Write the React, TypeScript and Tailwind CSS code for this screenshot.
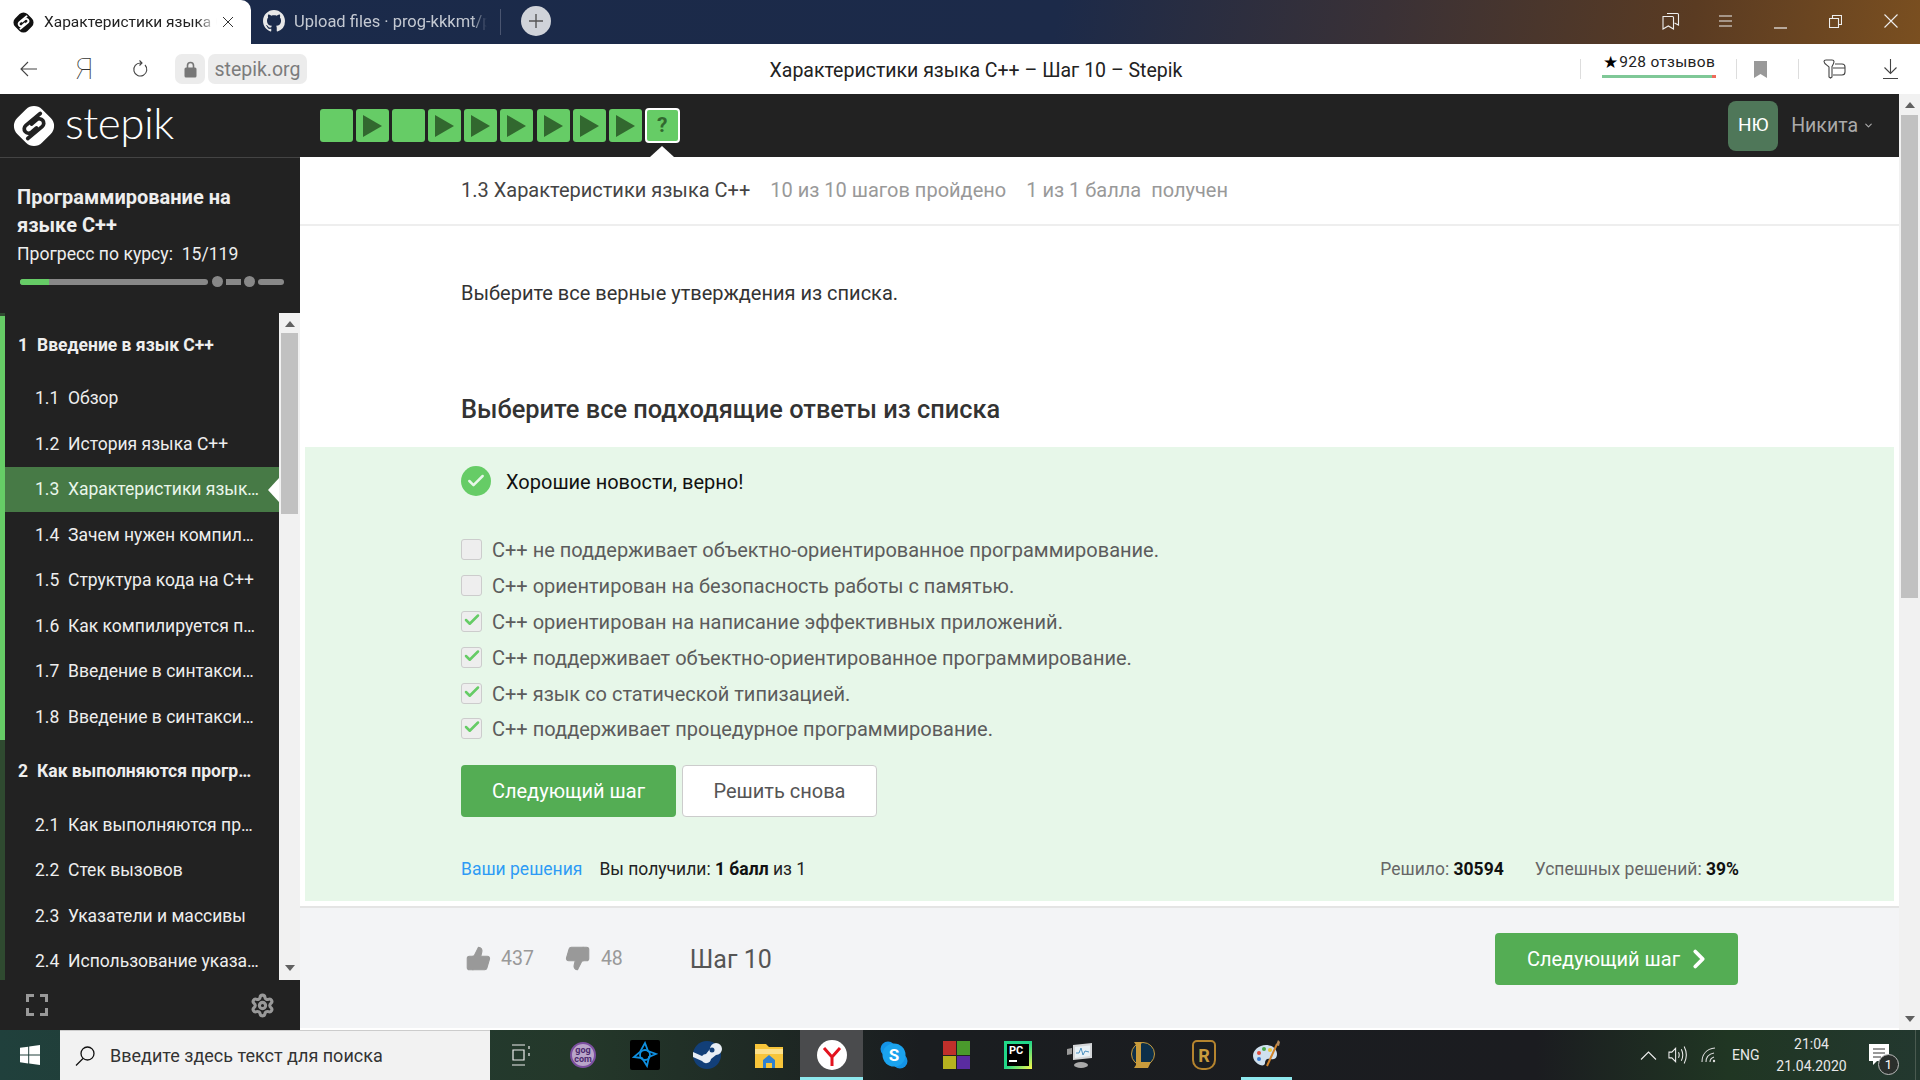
import type { ReactNode } from 'react'
import { Check, ChevronDown, ChevronRight, Settings, ThumbsDown, ThumbsUp } from 'lucide-react'

type Lesson = { num: string; title: string; done: boolean; active?: boolean }

const STEPS = ['square', 'play', 'square', 'play', 'play', 'play', 'play', 'play', 'play']

const LESSONS_1: Lesson[] = [
  { num: '1.1', title: 'Обзор', done: true },
  { num: '1.2', title: 'История языка С++', done: true },
  { num: '1.3', title: 'Характеристики языка С++', done: true, active: true },
  { num: '1.4', title: 'Зачем нужен компилятор', done: true },
  { num: '1.5', title: 'Структура кода на С++', done: true },
  { num: '1.6', title: 'Как компилируется программа', done: true },
  { num: '1.7', title: 'Введение в синтаксис С++', done: true },
  { num: '1.8', title: 'Введение в синтаксис С++', done: true },
]

const LESSONS_2: Lesson[] = [
  { num: '2.1', title: 'Как выполняются программы', done: false },
  { num: '2.2', title: 'Стек вызовов', done: false },
  { num: '2.3', title: 'Указатели и массивы', done: false },
  { num: '2.4', title: 'Использование указателей', done: false },
]

const ANSWERS = [
  { text: 'С++ не поддерживает объектно-ориентированное программирование.', checked: false },
  { text: 'С++ ориентирован на безопасность работы с памятью.', checked: false },
  { text: 'С++ ориентирован на написание эффективных приложений.', checked: true },
  { text: 'С++ поддерживает объектно-ориентированное программирование.', checked: true },
  { text: 'С++ язык со статической типизацией.', checked: true },
  { text: 'С++ поддерживает процедурное программирование.', checked: true },
]

function StepikMark({ size, color, hole }: { size: number; color: string; hole: string }) {
  return (
    <svg width={size} height={size} viewBox="0 0 40 40">
      <rect x="6" y="6" width="28" height="28" rx="9" transform="rotate(45 20 20)" fill={color} />
      <path
        d="M25 10 L13.500 19.500 a3.500 3.500 0 0 0 4.500 5.500 L22 21.500"
        fill="none"
        stroke={hole}
        strokeWidth="3"
        strokeLinecap="round"
        strokeLinejoin="round"
      />
      <path
        d="M15 30 L26.500 20.500 a3.500 3.500 0 0 0 -4.500 -5.500 L18 18.500"
        fill="none"
        stroke={hole}
        strokeWidth="3"
        strokeLinecap="round"
        strokeLinejoin="round"
      />
    </svg>
  )
}

function TabBar() {
  return (
    <div className="flex h-[44px] items-stretch bg-[linear-gradient(100deg,#1a2a4a_0%,#1c2a49_55%,#3a3136_72%,#5a3b22_88%,#7a4f20_100%)]">
      <div className="flex w-[251px] items-center rounded-tr-[10px] bg-white pl-[11px]">
        <StepikMark size={25} color="#111" hole="#fff" />
        <span className="mt-[2px] ml-[8px] w-[173px] overflow-hidden text-[15.5px] whitespace-nowrap text-[#222] [mask-image:linear-gradient(90deg,#000_88%,transparent)]">Характеристики языка С++</span>
        <svg width="12" height="12" viewBox="0 0 12 12" className="ml-[5px]">
          <path d="M1 1l10 10M11 1L1 11" stroke="#333" strokeWidth="1" />
        </svg>
      </div>
      <div className="flex w-[249px] items-center pb-[2px] pl-[12px]">
        <svg width="22" height="22" viewBox="0 0 16 16" fill="#e8e8e8">
          <path d="M8 0C3.58 0 0 3.58 0 8c0 3.54 2.29 6.53 5.47 7.59.4.07.55-.17.55-.38 0-.19-.01-.82-.01-1.49-2.01.37-2.53-.49-2.69-.94-.09-.23-.48-.94-.82-1.13-.28-.15-.68-.52-.01-.53.63-.01 1.08.58 1.23.82.72 1.21 1.87.87 2.33.66.07-.52.28-.87.51-1.07-1.78-.2-3.64-.89-3.64-3.95 0-.87.31-1.59.82-2.15-.08-.2-.36-1.02.08-2.12 0 0 .67-.21 2.2.82.64-.18 1.32-.27 2-.27s1.36.09 2 .27c1.53-1.04 2.2-.82 2.2-.82.44 1.1.16 1.92.08 2.12.51.56.82 1.27.82 2.15 0 3.07-1.87 3.75-3.65 3.95.29.25.54.73.54 1.48 0 1.07-.01 1.93-.01 2.2 0 .21.15.46.55.38A8.01 8.01 0 0 0 16 8c0-4.42-3.58-8-8-8z" />
        </svg>
        <span className="mt-[2px] ml-[9px] w-[193px] overflow-hidden text-[16.5px] whitespace-nowrap text-[#c4c9d2] [mask-image:linear-gradient(90deg,#000_92%,transparent)]">Upload files · prog-kkkmt/prog</span>
      </div>
      <div className="my-[9px] w-px bg-[#4a5570]" />
      <div className="ml-[20px] flex items-center pb-[2px]">
        <div className="flex h-[30px] w-[30px] items-center justify-center rounded-full bg-[#d0d3d9]">
          <svg width="16" height="16" viewBox="0 0 16 16">
            <path d="M8 1v14M1 8h14" stroke="#555" strokeWidth="1.4" />
          </svg>
        </div>
      </div>
      <div className="ml-auto flex items-center pr-[22px] pb-[2px]">
        <svg width="18" height="20" viewBox="0 0 18 20" fill="none" stroke="#eee" strokeWidth="1.1" className="mr-[39px]">
          <path d="M1 5.500h9.500c.6 0 1 .4 1 1V18l-5.200-3L1 18V5.500zM5 2.500h10.500c.6 0 1 .4 1 1V14l-4-2" />
        </svg>
        <svg width="13" height="12" viewBox="0 0 13 12" stroke="#eee" strokeWidth="1.1" className="mr-[42px]">
          <path d="M0 1h13M0 6h13M0 11h13" />
        </svg>
        <svg width="13" height="4" viewBox="0 0 13 4" stroke="#eee" strokeWidth="1.2" className="mt-[11px] mr-[42px]">
          <path d="M0 3h13" />
        </svg>
        <svg width="13" height="13" viewBox="0 0 13 13" fill="none" stroke="#eee" strokeWidth="1.1" className="mr-[42px]">
          <path d="M.5 3.500h9v9h-9zM3.500 3.500v-3h9v9h-3" />
        </svg>
        <svg width="14" height="14" viewBox="0 0 14 14" stroke="#eee" strokeWidth="1.1">
          <path d="M.5.5l13 13M13.500.5l-13 13" />
        </svg>
      </div>
    </div>
  )
}

function AddressBar() {
  return (
    <div className="flex h-[50px] items-center bg-white">
      <svg width="18" height="16" viewBox="0 0 18 16" fill="none" stroke="#444" strokeWidth="1.1" className="ml-[20px]">
        <path d="M17 8H1M8 1L1 8l7 7" />
      </svg>
      <span className="ml-[36px] w-[20px] text-center text-[30px] leading-none font-thin text-[#333]">Я</span>
      <svg width="16" height="18" viewBox="0 0 16 18" fill="none" stroke="#444" strokeWidth="1.1" className="ml-[38px]">
        <path d="M13 5a6.500 6.500 0 1 1-4.500-2H10M7.500.5L10 3 7.500 5.500" />
      </svg>
      <div className="ml-[27px] flex h-[30px] w-[30px] items-center justify-center rounded-[7px] bg-[#ececec]">
        <svg width="13" height="17" viewBox="0 0 13 17">
          <path d="M3.500 7V4.500a3 3 0 0 1 6 0V7" fill="none" stroke="#777" strokeWidth="1.6" />
          <rect x="0.5" y="6.500" width="12" height="10" rx="1.500" fill="#777" />
        </svg>
      </div>
      <div className="ml-[3px] flex h-[30px] w-[99px] items-center justify-center rounded-[7px] bg-[#ececec] pt-[1px] text-[19.5px] text-[#7c7c7c]">
        stepik.org
      </div>
      <div className="mt-[3px] ml-[409px] w-[520px] text-center text-[19.5px] text-[#222]">Характеристики языка С++ – Шаг 10 – Stepik</div>
      <div className="ml-[344px] h-[20px] w-px bg-[#ddd]" />
      <div className="ml-[21px] flex w-[114px] flex-col pb-[10px]">
        <div className="flex h-[25px] items-center justify-center text-[15.5px] tracking-[0.3px] whitespace-nowrap text-[#222]">
          <span className="mr-[1px] text-[17px] text-black">★</span>928 отзывов
        </div>
        <div className="flex h-[3px]">
          <div className="w-[110px] bg-[#7fc897]" />
          <div className="w-[4px] bg-[#ee6a5a]" />
        </div>
      </div>
      <div className="ml-[20px] h-[20px] w-px bg-[#ddd]" />
      <svg width="13" height="17" viewBox="0 0 13 17" fill="#999" className="ml-[17px]">
        <path d="M0 0h13v17l-6.500-4L0 17z" />
      </svg>
      <div className="ml-[31px] h-[20px] w-px bg-[#ddd]" />
      <svg width="23" height="20" viewBox="0 0 23 20" fill="none" stroke="#444" strokeWidth="1.1" className="ml-[24px]">
        <path d="M1 2.500C1 1.500 2 1 3 1h6c1 0 2 .6 2 1.600 0 2-1.500 4-2 5V18l-1.500 1L6 18V8C5 6.500 1 5 1 2.500zM12 5h7c2 0 3 1 3 3v5c0 2-1 3-3 3h-9M10 9h12" />
      </svg>
      <svg width="15" height="20" viewBox="0 0 15 20" fill="none" stroke="#444" strokeWidth="1.1" className="ml-[37px]">
        <path d="M7.500 0v14M1.500 8.500l6 6 6-6M0 19.500h15" />
      </svg>
    </div>
  )
}

function StepTile({ kind }: { kind: string }) {
  return (
    <div className="flex h-[33px] w-[33px] items-center justify-center rounded-[3px] bg-[#66cc66]">
      {kind === 'play' && (
        <svg width="21" height="24" viewBox="0 0 21 24">
          <path d="M1 1l19 11L1 23z" fill="#32682f" />
        </svg>
      )}
    </div>
  )
}

function AppHeader() {
  return (
    <div className="flex h-[63px] items-center bg-[#222]">
      <div className="flex w-[320px] items-center pl-[9px]">
        <StepikMark size={50} color="#fff" hole="#222" />
        <span className="ml-[6px] pb-[7px] text-[44px] leading-none font-light tracking-[-0.5px] text-white [font-family:Lato,sans-serif]">stepik</span>
      </div>
      <div className="flex items-center gap-[3.100px]">
        {STEPS.map((kind, i) => (
          <StepTile key={i} kind={kind} />
        ))}
        <div className="relative">
          <div className="flex h-[35px] w-[35px] items-center justify-center rounded-[4px] border-2 border-white bg-[#66cc66] text-[21px] font-bold text-[#32682f]">?</div>
          <div className="absolute top-[38px] left-[5px] h-0 w-0 border-x-[12px] border-b-[11px] border-x-transparent border-b-white" />
        </div>
      </div>
      <div className="ml-auto flex items-center pr-[25px]">
        <div className="flex h-[50px] w-[50px] items-center justify-center rounded-[8px] bg-[#4f7759] text-[19px] text-white">НЮ</div>
        <span className="ml-[13px] text-[19.5px] text-[#aaa]">Никита</span>
        <ChevronDown size={11} strokeWidth={2.5} className="ml-[5px] text-[#aaa]" />
      </div>
    </div>
  )
}

function LessonRow({ lesson }: { lesson: Lesson }) {
  const strip = lesson.done ? 'border-[#66cc66]' : 'border-[#2f4a30]'
  return (
    <div className={`relative flex h-[45.5px] items-center border-l-[5px] pl-[30px] ${strip} ${lesson.active ? 'bg-[#477a46] text-[#eaf6ea]' : 'text-[#eee]'}`}>
      <span className="w-[33px] shrink-0">{lesson.num}</span>
      <span className="w-[192px] overflow-hidden text-ellipsis whitespace-nowrap">{lesson.title}</span>
      {lesson.active && (
        <div className="absolute top-[11px] right-0 h-0 w-0 border-y-[12px] border-r-[11px] border-y-transparent border-r-white" />
      )}
    </div>
  )
}

function SectionRow({ num, title, strip, lift }: { num: string; title: string; strip: string; lift?: boolean }) {
  return (
    <div className={`flex h-[62.5px] items-center border-l-[5px] pl-[13px] font-bold text-[#eee] ${strip} ${lift ? 'pb-[5px]' : ''}`}>
      <span className="w-[19px] shrink-0">{num}</span>
      <span className="w-[218px] overflow-hidden text-ellipsis whitespace-nowrap">{title}</span>
    </div>
  )
}

function ScrollArrow({ up, className }: { up: boolean; className?: string }) {
  return (
    <svg width="10" height="6" viewBox="0 0 10 6" fill="#606060" className={className}>
      <path d={up ? 'M5 0l5 6H0z' : 'M0 0h10L5 6z'} />
    </svg>
  )
}

function Sidebar() {
  return (
    <div className="flex w-[300px] shrink-0 flex-col border-t border-[#444] bg-[#222]">
      <div className="h-[155px] pt-[25px] pl-[17px]">
        <div className="w-[250px] text-[20px] leading-[28px] font-bold text-[#eee]">Программирование на языке С++</div>
        <div className="mt-[1px] text-[17.6px] leading-[28px] text-[#eee]">Прогресс по курсу:&nbsp; 15/119</div>
        <div className="mt-[8px] ml-[3px] flex items-center">
          <div className="flex h-[6px] w-[188px] overflow-hidden rounded-full bg-[#888]">
            <div className="w-[29px] bg-[#66cc66]" />
          </div>
          <div className="ml-[4px] h-[11px] w-[11px] rounded-full bg-[#888]" />
          <div className="ml-[3px] h-[6px] w-[15px] bg-[#888]" />
          <div className="ml-[3px] h-[11px] w-[11px] rounded-full bg-[#888]" />
          <div className="ml-[3px] h-[6px] w-[26px] rounded-full bg-[#888]" />
        </div>
      </div>
      <div className="flex h-[667px]">
        <div className="w-[279px] overflow-hidden text-[17.5px]">
          <div className="h-[3px] border-l-[5px] border-[#2f4a30]" />
          <SectionRow num="1" title="Введение в язык С++" strip="border-[#66cc66]" lift />
          <div className="-mt-[3px]">
            {LESSONS_1.map((l) => (
              <LessonRow key={l.num} lesson={l} />
            ))}
          </div>
          <SectionRow num="2" title="Как выполняются программы" strip="border-[#2f4a30]" />
          {LESSONS_2.map((l) => (
            <LessonRow key={l.num} lesson={l} />
          ))}
        </div>
        <div className="flex w-[21px] flex-col items-center bg-[#f1f1f1]">
          <ScrollArrow up className="mt-[8px]" />
          <div className="mt-[6px] h-[181px] w-[17px] bg-[#c1c1c1]" />
          <ScrollArrow up={false} className="mt-auto mb-[9px]" />
        </div>
      </div>
      <div className="flex h-[50px] items-center justify-between pr-[25px] pl-[26px]">
        <svg width="22" height="22" viewBox="0 0 22 22" fill="none" stroke="#999" strokeWidth="3">
          <path d="M1.500 8V1.500H8M14 1.500h6.500V8M20.500 14v6.500H14M8 20.500H1.500V14" />
        </svg>
        <Settings size={25} strokeWidth={3} className="text-[#999]" />
      </div>
    </div>
  )
}

function AnswerRow({ text, checked }: { text: string; checked: boolean }) {
  return (
    <div className="flex h-[35.8px] items-center">
      <div className="flex h-[21px] w-[21px] shrink-0 items-center justify-center rounded-[3px] border border-[#ccc] bg-[#eee]">
        {checked && <Check size={18} strokeWidth={3.4} className="-mt-[3px] text-[#66cc66]" />}
      </div>
      <span className="mt-[1px] ml-[10px] text-[20px] text-[#5c5c5c]">{text}</span>
    </div>
  )
}

function FeedbackPanel() {
  return (
    <div className="mx-[5px] bg-[#e7f7e9] pt-[19px] pr-[155px] pb-[18px] pl-[156px]">
      <div className="flex h-[30px] items-center">
        <div className="flex h-[30px] w-[30px] items-center justify-center rounded-full bg-[#66cc66]">
          <Check size={20} strokeWidth={3} className="text-[#e7f7e9]" />
        </div>
        <span className="mt-[1px] ml-[15px] text-[20px] text-[#111]">Хорошие новости, верно!</span>
      </div>
      <div className="mt-[36px]">
        {ANSWERS.map((a) => (
          <AnswerRow key={a.text} text={a.text} checked={a.checked} />
        ))}
      </div>
      <div className="mt-[18.200px] flex gap-[6px]">
        <button className="h-[52px] w-[215px] rounded-[4px] bg-[#54ad54] text-[20px] text-white">Следующий шаг</button>
        <button className="h-[52px] w-[195px] rounded-[4px] border border-[#ccc] bg-white text-[20px] text-[#555]">Решить снова</button>
      </div>
      <div className="mt-[38px] flex h-[28px] items-center text-[17.5px]">
        <span className="text-[#2e9bf5]">Ваши решения</span>
        <span className="ml-[17px] text-[#222]">
          Вы получили: <b className="text-[#111]">1 балл</b> из 1
        </span>
        <span className="ml-auto text-[#666]">
          Решило: <b className="text-[#111]">30594</b>
        </span>
        <span className="ml-[31px] text-[#666]">
          Успешных решений: <b className="text-[#111]">39%</b>
        </span>
      </div>
    </div>
  )
}

function StepFooter() {
  return (
    <div className="flex h-[122px] items-start border-t-2 border-[#e4e4e4] bg-[#f3f4f6] pt-[25px] pr-[161px] pl-[165px]">
      <div className="flex h-[52px] items-center text-[19.5px] text-[#999]">
        <ThumbsUp size={27} fill="#999" strokeWidth={1} />
        <span className="ml-[9px]">437</span>
        <ThumbsDown size={27} fill="#999" strokeWidth={1} className="ml-[30px]" />
        <span className="ml-[10px]">48</span>
        <span className="mt-[1px] ml-[67px] text-[25px] text-[#555]">Шаг 10</span>
      </div>
      <button className="ml-auto flex h-[52px] w-[243px] items-center justify-center rounded-[4px] bg-[#54ad54] pl-[8px] text-[20px] text-white">
        Следующий шаг
        <ChevronRight size={30} strokeWidth={3} className="ml-[4px]" />
      </button>
    </div>
  )
}

function MainColumn() {
  return (
    <div className="flex flex-1 flex-col bg-white">
      <div className="flex h-[69px] items-center border-b-2 border-[#eee] pb-[1px] pl-[161px] text-[20px]">
        <span className="text-[#444]">1.3 Характеристики языка С++</span>
        <span className="ml-[20px] text-[#999]">10 из 10 шагов пройдено</span>
        <span className="ml-[20px] text-[#999]">1 из 1 балла&nbsp; получен</span>
      </div>
      <div className="h-[221px] pt-[53px] pl-[161px]">
        <p className="text-[20px] leading-[28px] text-[#333]">Выберите все верные утверждения из списка.</p>
        <h2 className="mt-[86px] text-[25.4px] leading-[32px] font-medium text-[#333]">Выберите все подходящие ответы из списка</h2>
      </div>
      <FeedbackPanel />
      <div className="h-[5px]" />
      <StepFooter />
    </div>
  )
}

function AppIcon({ children, w = 62 }: { children: ReactNode; w?: number }) {
  return (
    <div className="flex h-full items-center justify-center" style={{ width: w }}>
      {children}
    </div>
  )
}

function Taskbar() {
  return (
    <div className="flex h-[50px] items-stretch bg-[linear-gradient(90deg,#20403c_0%,#24382a_30%,#1a1d20_48%,#1b1c20_80%,#203623_90%,#23382f_100%)]">
      <div className="flex w-[60px] items-center justify-center">
        <svg width="20" height="20" viewBox="0 0 20 20" fill="#fff">
          <path d="M0 2.800l8.200-1.100v7.900H0zM9.200 1.500L20 0v9.600H9.200zM0 10.500h8.200v7.900L0 17.200zM9.200 10.500H20V20l-10.800-1.500z" />
        </svg>
      </div>
      <div className="flex w-[430px] items-center border-t border-[#ccc] bg-[#f2f2f2] pl-[14px]">
        <svg width="22" height="22" viewBox="0 0 22 22" fill="none" stroke="#111" strokeWidth="1.3">
          <circle cx="13.500" cy="8.500" r="6.500" />
          <path d="M9 13.500L2 20.500" />
        </svg>
        <span className="ml-[14px] text-[18px] text-[#333]">Введите здесь текст для поиска</span>
      </div>
      <AppIcon>
        <svg width="20" height="22" viewBox="0 0 20 22" fill="none" stroke="#eee" strokeWidth="1.2">
          <path d="M1 1h13M1 21h13M2 6h11v10H2zM18 2v3M18 9v3" />
        </svg>
      </AppIcon>
      <AppIcon>
        <div className="flex h-[26px] w-[26px] flex-col items-center justify-center rounded-full border-2 border-[#7c4fa0] bg-[#b9a5c9] text-[9px] leading-[9px] font-bold text-[#4b2a6e]">
          <span>gog</span>
          <span>com</span>
        </div>
      </AppIcon>
      <AppIcon>
        <div className="flex h-[30px] w-[30px] items-center justify-center rounded-[2px] bg-black">
          <svg width="26" height="28" viewBox="0 0 26 28" fill="none" stroke="#0f8fe0" strokeWidth="1.8">
            <path d="M13 2l3 8 8 3-7 3-2 9-5-8-8-1 6-5z" />
            <circle cx="13" cy="14" r="5" />
          </svg>
        </div>
      </AppIcon>
      <AppIcon>
        <svg width="30" height="30" viewBox="0 0 30 30">
          <circle cx="15" cy="15" r="14" fill="#123f78" />
          <path d="M1 17l9 4a5 5 0 0 0 9-2l5-4a6 6 0 1 0-6-6l-4 5a5 5 0 0 0-4 2L1 12z" fill="#e8eef5" />
          <circle cx="20" cy="10" r="2.500" fill="#123f78" />
        </svg>
      </AppIcon>
      <AppIcon>
        <svg width="28" height="26" viewBox="0 0 28 26">
          <path d="M0 2h11l3 3h14v21H0z" fill="#f8c53a" />
          <path d="M0 7h28v5H0z" fill="#fde08a" />
          <path d="M8 18l6-5 6 5v8h-3v-5h-6v5H8z" fill="#2f80d0" />
        </svg>
      </AppIcon>
      <div className="flex w-[63px] flex-col border-b-[3px] border-[#8ee8ee] bg-[#4a4b4d]">
        <div className="flex flex-1 items-center justify-center pt-[2px]">
          <svg width="30" height="30" viewBox="0 0 30 30">
            <circle cx="15" cy="15" r="15" fill="#fff" />
            <path d="M7 8l8 9v9M23 8l-8 9" fill="none" stroke="#e3131e" strokeWidth="3" />
          </svg>
        </div>
      </div>
      <AppIcon>
        <svg width="28" height="28" viewBox="0 0 28 28">
          <circle cx="8" cy="8" r="7.500" fill="#1493e6" />
          <circle cx="20" cy="20" r="7.500" fill="#1493e6" />
          <circle cx="14" cy="14" r="11.500" fill="#1ba3ee" />
          <text x="14" y="20" textAnchor="middle" fontSize="17" fontWeight="700" fill="#fff" fontFamily="Roboto, sans-serif">S</text>
        </svg>
      </AppIcon>
      <AppIcon>
        <div className="grid h-[28px] w-[27px] grid-cols-2 gap-px bg-[#222]">
          <div className="bg-[#c0302b]" />
          <div className="bg-[#4a9a2c]" />
          <div className="bg-[#b6b21f]" />
          <div className="bg-[#5a2ca0]" />
        </div>
      </AppIcon>
      <AppIcon>
        <div className="flex h-[28px] w-[28px] items-center justify-center bg-[linear-gradient(135deg,#21d789_0%,#21d789_50%,#fcf84a_100%)]">
          <div className="flex h-[22px] w-[22px] flex-col bg-black pt-[1px] pl-[2px] text-[11px] leading-[12px] font-bold text-white">
            PC
            <div className="mt-[3px] h-[2px] w-[8px] bg-white" />
          </div>
        </div>
      </AppIcon>
      <AppIcon>
        <svg width="28" height="28" viewBox="0 0 28 28">
          <path d="M7 4l19-2v15L7 19z" fill="#d4d6d8" />
          <path d="M9 6l15-1.500V15L9 17z" fill="#e8f0f5" />
          <path d="M10 12l3 0 2-5 2 7 2-4 4 1" fill="none" stroke="#4a90c0" strokeWidth="1" />
          <ellipse cx="15" cy="24" rx="7" ry="3" fill="#aaa" />
          <path d="M1 8l5-1v6l-5 1z" fill="#999" />
        </svg>
      </AppIcon>
      <AppIcon>
        <svg width="26" height="28" viewBox="0 0 26 28">
          <circle cx="14" cy="13" r="11.500" fill="#0c2f4a" stroke="#c89b3c" strokeWidth="1" />
          <path d="M5 1h8l-1 2v18h10l-3 6H5l2-3V4z" fill="#c89b3c" />
        </svg>
      </AppIcon>
      <AppIcon>
        <div className="flex h-[30px] w-[24px] items-center justify-center rounded-t-[5px] rounded-b-[10px] border-2 border-[#b5842e] text-[18px] font-bold text-[#c99a3d]">R</div>
      </AppIcon>
      <div className="flex w-[62px] justify-center">
        <div className="flex h-full w-[51px] items-center justify-center border-b-[3px] border-[#8ee8ee]">
          <svg width="30" height="30" viewBox="0 0 30 30">
            <path d="M2 17c0-6 6-11 13-11 6 0 11 4 11 9s-4 6-7 5-5 1-5 4-4 3-7 1-5-5-5-8z" fill="#cfe0ee" />
            <circle cx="8" cy="14" r="2" fill="#e04a3a" />
            <circle cx="13" cy="10" r="2" fill="#4aa84a" />
            <circle cx="19" cy="11" r="2" fill="#e8c53a" />
            <circle cx="8" cy="20" r="2" fill="#3a7ad0" />
            <path d="M16 27L26 5" stroke="#d0822a" strokeWidth="2" />
            <path d="M25 6l2-5 2 2-1 4z" fill="#b58a5a" />
          </svg>
        </div>
      </div>
      <div className="ml-auto flex items-center pr-[4px] text-[#e8e8e8]">
        <svg width="17" height="9" viewBox="0 0 17 9" fill="none" stroke="#eee" strokeWidth="1.100">
          <path d="M1 8.500l7.500-7.500 7.500 7.500" />
        </svg>
        <svg width="20" height="20" viewBox="0 0 21 20" fill="none" stroke="#eee" strokeWidth="1.100" className="ml-[11px]">
          <path d="M1 7h3l4-4v14l-4-4H1zM11 7c1 2 1 4 0 6M14 4c2 4 2 8 0 12M17 1c3 6 3 12 0 18" />
        </svg>
        <svg width="16" height="16" viewBox="0 0 16 16" fill="none" stroke="#ddd" strokeWidth="1.100" className="ml-[13px]">
          <path d="M1 15C1 8 5 2 14 1M5 15c0-5 3-8 8-9M9 15c0-3 1-4 4-5" />
          <circle cx="13" cy="14" r="1.200" fill="#ddd" stroke="none" />
        </svg>
        <span className="ml-[15px] w-[28px] text-[14px] whitespace-nowrap">ENG</span>
        <div className="ml-[17px] flex w-[69px] flex-col items-center text-[14px] leading-[22px] whitespace-nowrap">
          <span>21:04</span>
          <span>21.04.2020</span>
        </div>
        <div className="relative ml-[23px] h-[22px] w-[20px]">
          <svg width="20" height="22" viewBox="0 0 20 22">
            <path d="M0 0h20v17H8l-4 4v-4H0z" fill="#fff" />
            <path d="M4 5h12M4 9h12M4 13h8" stroke="#333" strokeWidth="1" />
          </svg>
          <div className="absolute top-[10px] left-[9px] flex h-[21px] w-[21px] items-center justify-center rounded-full border border-[#bbb] bg-[#2a2f2c] text-[13px] text-white">1</div>
        </div>
        <div className="ml-[26px] h-full w-px bg-[#4a5a50]" />
      </div>
    </div>
  )
}

export default function App() {
  return (
    <div className="flex h-screen w-full flex-col overflow-hidden font-['Roboto',sans-serif]">
      <TabBar />
      <AddressBar />
      <div className="flex h-[936px]">
        <div className="flex w-[1899px] flex-col">
          <AppHeader />
          <div className="flex h-[873px] overflow-hidden">
            <Sidebar />
            <MainColumn />
          </div>
        </div>
        <div className="flex w-[21px] flex-col items-center bg-[#f1f1f1]">
          <ScrollArrow up className="mt-[8px]" />
          <div className="mt-[7px] h-[483px] w-[17px] bg-[#c1c1c1]" />
          <ScrollArrow up={false} className="mt-auto mb-[8px]" />
        </div>
      </div>
      <Taskbar />
    </div>
  )
}
